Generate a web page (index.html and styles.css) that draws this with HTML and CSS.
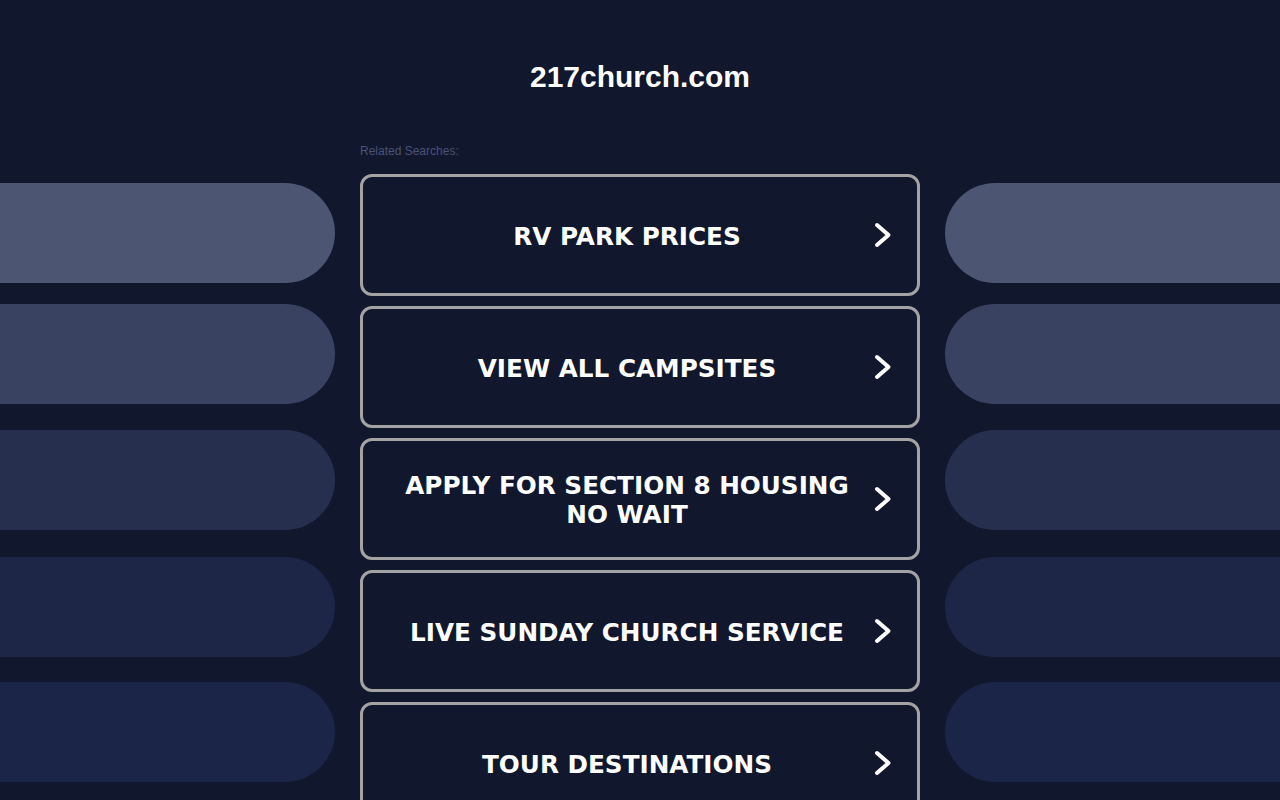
FILE: index.html
```html
<!DOCTYPE html>
<html lang="en">
<head>
<meta charset="utf-8">
<title>217church.com</title>
<link rel="stylesheet" href="styles.css">
</head>
<body>
<div class="page">
  <header class="header">
    <h1 class="domain">217church.com</h1>
  </header>
  <div class="layout">
    <div class="side side-left">
      <div class="pill p1"></div>
      <div class="pill p2"></div>
      <div class="pill p3"></div>
      <div class="pill p4"></div>
      <div class="pill p5"></div>
    </div>
    <main class="center">
      <div class="related">Related Searches:</div>
      <ul class="links">
        <li><a class="link" href="#"><span class="label">RV PARK PRICES</span><svg class="chev" viewBox="0 0 18 26" width="18" height="26"><path d="M3 3 L14.5 13 L3 23" fill="none" stroke="#fff" stroke-width="4" stroke-linecap="round" stroke-linejoin="round"/></svg></a></li>
        <li><a class="link" href="#"><span class="label">VIEW ALL CAMPSITES</span><svg class="chev" viewBox="0 0 18 26" width="18" height="26"><path d="M3 3 L14.5 13 L3 23" fill="none" stroke="#fff" stroke-width="4" stroke-linecap="round" stroke-linejoin="round"/></svg></a></li>
        <li><a class="link" href="#"><span class="label">APPLY FOR SECTION 8 HOUSING NO WAIT</span><svg class="chev" viewBox="0 0 18 26" width="18" height="26"><path d="M3 3 L14.5 13 L3 23" fill="none" stroke="#fff" stroke-width="4" stroke-linecap="round" stroke-linejoin="round"/></svg></a></li>
        <li><a class="link" href="#"><span class="label">LIVE SUNDAY CHURCH SERVICE</span><svg class="chev" viewBox="0 0 18 26" width="18" height="26"><path d="M3 3 L14.5 13 L3 23" fill="none" stroke="#fff" stroke-width="4" stroke-linecap="round" stroke-linejoin="round"/></svg></a></li>
        <li><a class="link" href="#"><span class="label">TOUR DESTINATIONS</span><svg class="chev" viewBox="0 0 18 26" width="18" height="26"><path d="M3 3 L14.5 13 L3 23" fill="none" stroke="#fff" stroke-width="4" stroke-linecap="round" stroke-linejoin="round"/></svg></a></li>
      </ul>
    </main>
    <div class="side side-right">
      <div class="pill p1"></div>
      <div class="pill p2"></div>
      <div class="pill p3"></div>
      <div class="pill p4"></div>
      <div class="pill p5"></div>
    </div>
  </div>
</div>
</body>
</html>
```

FILE: styles.css
```css
html, body {
  margin: 0;
  padding: 0;
  background: #11172d;
}
body {
  font-family: "Liberation Sans", Arial, sans-serif;
  color: #fff;
  overflow: hidden;
}
.page {
  width: 1280px;
}
.header {
  height: 143px;
  display: flex;
  justify-content: center;
}
.domain {
  margin: 57px 0 0;
  font-family: "Liberation Sans", Arial, sans-serif;
  font-weight: bold;
  font-size: 30px;
  line-height: 40px;
  color: #fff;
}
.layout {
  display: grid;
  grid-template-columns: 335px 560px 335px;
  column-gap: 25px;
}
.side {
  display: flex;
  flex-direction: column;
  padding-top: 40px;
}
.pill {
  height: 100px;
  flex: none;
}
.side-left .pill {
  border-radius: 0 50px 50px 0;
}
.side-right .pill {
  border-radius: 50px 0 0 50px;
}
.pill.p1 { background: #4c5672; }
.pill.p2 { background: #3a4261; margin-top: 21px; }
.pill.p3 { background: #272f4f; margin-top: 26px; }
.pill.p4 { background: #1d2647; margin-top: 27px; }
.pill.p5 { background: #1b2547; margin-top: 25px; }
.center {
  display: flex;
  flex-direction: column;
}
.related {
  font-family: "Liberation Sans", Arial, sans-serif;
  font-size: 12px;
  line-height: 14px;
  color: #4a5377;
  height: 30px;
  padding-top: 1px;
}
.links {
  list-style: none;
  margin: 0;
  padding: 0;
  display: flex;
  flex-direction: column;
  gap: 10px;
}
.link {
  box-sizing: border-box;
  height: 122px;
  border: 3px solid #a3a3a3;
  border-radius: 12px;
  display: flex;
  align-items: center;
  padding: 2px 25px 0 38px;
  text-decoration: none;
  color: #fff;
}
.label {
  flex: 1;
  text-align: center;
  font-family: "DejaVu Sans", Verdana, sans-serif;
  font-weight: bold;
  font-size: 24.7px;
  line-height: 29px;
  color: #fff;
  margin-right: 21px;
}
.chev {
  flex: none;
  display: block;
  margin-top: -2px;
}
```
